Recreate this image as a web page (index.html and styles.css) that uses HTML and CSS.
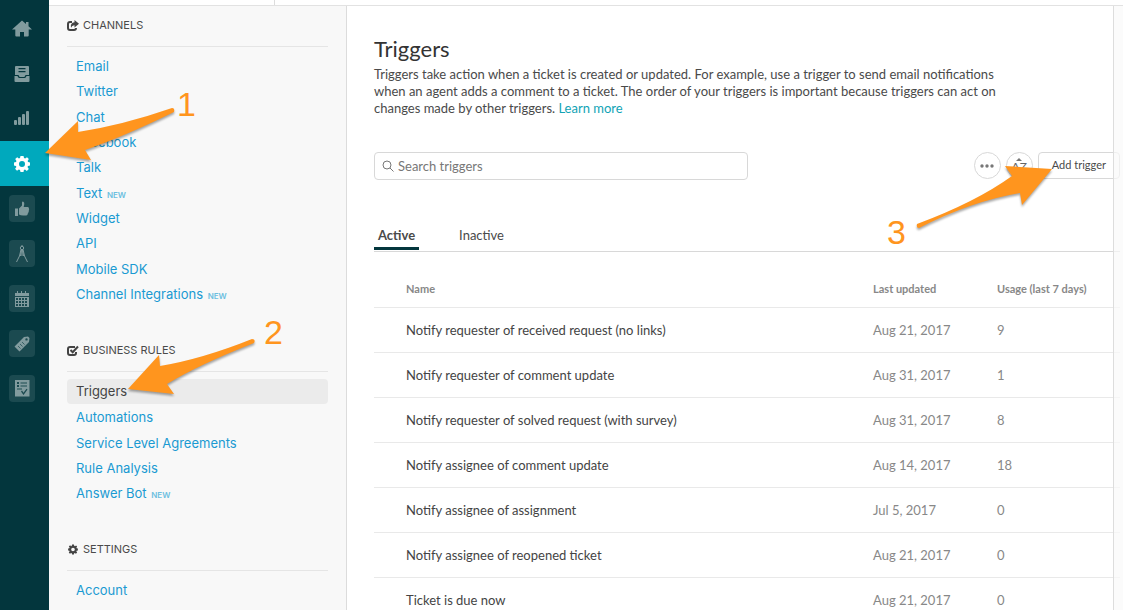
FILE: index.html
```html
<!DOCTYPE html>
<html lang="en">
<head>
<meta charset="utf-8">
<title>Triggers</title>
<meta name="viewport" content="width=device-width, initial-scale=1">
<link rel="stylesheet" href="styles.css">
</head>
<body>
<div class="app">
  <nav class="rail" aria-label="Primary">
    <a class="rail-item" href="#" aria-label="Home"><svg width="20" height="17" viewBox="0 0 20 17"><path d="M10 0.500 0 9.500h3.300v6q0 1 1 1H8v-4.500h4v4.500h3.700q1 0 1-1v-6H20l-3.500-3.200V2h-2.500v2z"/></svg></a>
    <a class="rail-item" href="#" aria-label="Views"><svg width="16" height="18" viewBox="0 0 16 18"><path fill-rule="evenodd" d="M2 1h12q1 0 1 1v8h-3.500q-.5 2-1.500 2H6q-1 0-1.500-2H1V2q0-1 1-1zm2.500 2v1.200h7V3zm0 3v1.200h7V6z"/><path d="M.5 11h3q.5 2 2 2h5q1.500 0 2-2h3v5q0 1-1 1h-13q-1 0-1-1z"/></svg></a>
    <a class="rail-item" href="#" aria-label="Reporting"><svg width="16" height="15" viewBox="0 0 16 15"><rect y="9" width="3" height="5" rx="1"/><rect x="4" y="6" width="3" height="8" rx="1"/><rect x="8" y="3" width="3" height="11" rx="1"/><rect x="12" width="3" height="14" rx="1"/></svg></a>
    <a class="rail-item active" href="#" aria-label="Admin"><svg width="18" height="18" viewBox="0 0 18 18"><path fill-rule="evenodd" d="M7.500 1h3l.5 2 1.200.5L14 2.300l1.800 1.800-1.200 1.800.5 1.200 1.900.4v3l-2 .4-.5 1.200 1.300 1.800-2 2-1.800-1.300-1.100.5-.4 2h-3l-.5-2-1.200-.5L4 15.800l-1.900-2 1.300-1.700-.5-1.200-1.900-.4v-3l2-.4.5-1.200-1.300-1.800 2-1.900 1.700 1.300L7 3zM9 6a3 3 0 1 0 0 6 3 3 0 0 0 0-6z"/></svg></a>
    <a class="rail-item boxed" href="#" aria-label="Satisfaction"><span><svg width="16" height="16" viewBox="0 0 16 16"><path d="M1 7.500h3V15H1zM5 7.500l3-3V1.500Q8 .5 9 .5q1.500.5 1.300 2.500l-.6 3h4q1.500.2 1.200 1.500.6.9-.1 1.700.5 1-.4 1.700.2 1-.6 1.700-.1 1.900-1.500 1.900H9q-2.500 0-4-1z"/></svg></span></a>
    <a class="rail-item boxed" href="#" aria-label="Compass"><span><svg width="14" height="18" viewBox="0 0 14 18"><path class="stroke" d="M7 0v1M6 4.500 4.500 11 1.500 17M8 4.500 9.500 11l3 6M7 5v6M6.500 5l-1 6M7.500 5l1 6"/><circle class="stroke" cx="7" cy="3" r="1.700"/></svg></span></a>
    <a class="rail-item boxed" href="#" aria-label="Calendar"><span><svg width="14" height="16" viewBox="0 0 14 16"><path fill-rule="evenodd" d="M0 2h2V0h1v2h3V0h1v2h3V0h1v2h3v3H0zM0 6h14v10H0zM1 7v2h2V7zm3 0v2h2V7zm3 0v2h2V7zm3 0v2h2V7zM1 10v2h2v-2zm3 0v2h2v-2zm3 0v2h2v-2zm3 0v2h2v-2zM1 13v2h2v-2zm3 0v2h2v-2zm3 0v2h2v-2zm3 0v2h2v-2z"/></svg></span></a>
    <a class="rail-item boxed" href="#" aria-label="Tags"><span><svg width="16" height="16" viewBox="0 0 16 16"><path fill-rule="evenodd" d="m10 1 4-.5 1.500 1.500L15 6l-9.500 9.500L.5 10.500zM12.500 2.200a1.200 1.200 0 1 0 0 2.400 1.200 1.200 0 0 0 0-2.400z"/><path class="cut" d="m8 6 2.500 2.500M6 8l2.500 2.500M4 10l2.500 2.500" stroke-dasharray="1 .5"/></svg></span></a>
    <a class="rail-item boxed" href="#" aria-label="Checklist"><span><svg width="15" height="17" viewBox="0 0 15 17"><path fill-rule="evenodd" d="M0 0h14.500v16.500H0zM2 2v2h2V2zm3.500.5v1H12v-1zM2 5v2h2V5zm3.500.5v1H12v-1zM2 8.500v1h5v-1zm4 3L8.500 15l4-5.500-1-.8-3 4L7 10.500z"/></svg></span></a>
  </nav>

  <div class="workspace">
    <header class="tabs-bar"><div class="tab-slot"></div></header>
    <div class="columns">
      <aside class="sidebar">
        <section>
          <h2><svg width="12" height="11" viewBox="0 0 12 11"><path class="line" d="M5 2H3Q1 2 1 4v4q0 2 2 2h4q2 0 2-2"/><path d="M7.500 0 12 3.700 7.500 7.400V5.200Q5 5 4 7.800 3 2.800 7.500 2.300z"/></svg>CHANNELS</h2>
          <ul>
            <li><a href="#">Email</a></li>
            <li><a href="#">Twitter</a></li>
            <li><a href="#">Chat</a></li>
            <li><a href="#">Facebook</a></li>
            <li><a href="#">Talk</a></li>
            <li><a href="#">Text <small>NEW</small></a></li>
            <li><a href="#">Widget</a></li>
            <li><a href="#">API</a></li>
            <li><a href="#">Mobile SDK</a></li>
            <li><a href="#">Channel Integrations <small>NEW</small></a></li>
          </ul>
        </section>
        <section>
          <h2><svg width="12" height="11" viewBox="0 0 12 11"><path class="line" d="M8 2H3Q1 2 1 4v4q0 2 2 2h4q2 0 2-2V7M3.500 5l2.200 2.200L11 1.500"/></svg>BUSINESS RULES</h2>
          <ul>
            <li class="current"><a href="#" aria-current="page">Triggers</a></li>
            <li><a href="#">Automations</a></li>
            <li><a href="#">Service Level Agreements</a></li>
            <li><a href="#">Rule Analysis</a></li>
            <li><a href="#">Answer Bot <small>NEW</small></a></li>
          </ul>
        </section>
        <section>
          <h2><svg width="12" height="11" viewBox="0 0 18 18"><path fill-rule="evenodd" d="M7.500 1h3l.5 2 1.200.5L14 2.300l1.800 1.800-1.200 1.800.5 1.200 1.900.4v3l-2 .4-.5 1.200 1.300 1.800-2 2-1.800-1.300-1.100.5-.4 2h-3l-.5-2-1.200-.5L4 15.800l-1.900-2 1.300-1.700-.5-1.200-1.900-.4v-3l2-.4.5-1.200-1.300-1.800 2-1.900 1.700 1.300L7 3zM9 6a3 3 0 1 0 0 6 3 3 0 0 0 0-6z"/></svg>SETTINGS</h2>
          <ul>
            <li><a href="#">Account</a></li>
          </ul>
        </section>
      </aside>

      <main>
        <h1>Triggers</h1>
        <p class="intro">Triggers take action when a ticket is created or updated. For example, use a trigger to send email notifications<br>when an agent adds a comment to a ticket. The order of your triggers is important because triggers can act on<br>changes made by other triggers. <a href="#">Learn more</a></p>
        <div class="toolbar">
          <label class="search">
            <svg width="12" height="12" viewBox="0 0 12 12"><circle cx="5" cy="5" r="4"/><path d="m8 8 3.500 3.500"/></svg>
            <input type="search" placeholder="Search triggers" aria-label="Search triggers">
          </label>
          <div class="actions">
            <button class="round" type="button" aria-label="More"><svg width="16" height="4" viewBox="0 0 16 4"><circle cx="3" cy="2" r="1.700"/><circle cx="8" cy="2" r="1.700"/><circle cx="13" cy="2" r="1.700"/></svg></button>
            <button class="round sort" type="button" aria-label="Sort"><svg width="8" height="3" viewBox="0 0 8 3"><path d="m4 0 3 3H1z"/></svg>AZ</button>
            <button class="add" type="button">Add trigger</button>
          </div>
        </div>
        <div class="tabs" role="tablist">
          <button type="button" role="tab" aria-selected="true">Active</button>
          <button type="button" role="tab" aria-selected="false">Inactive</button>
        </div>
        <table>
          <thead><tr><th class="name">Name</th><th class="date">Last updated</th><th class="usage">Usage (last 7 days)</th></tr></thead>
          <tbody>
            <tr><td>Notify requester of received request (no links)</td><td>Aug 21, 2017</td><td>9</td></tr>
            <tr><td>Notify requester of comment update</td><td>Aug 31, 2017</td><td>1</td></tr>
            <tr><td>Notify requester of solved request (with survey)</td><td>Aug 31, 2017</td><td>8</td></tr>
            <tr><td>Notify assignee of comment update</td><td>Aug 14, 2017</td><td>18</td></tr>
            <tr><td>Notify assignee of assignment</td><td>Jul 5, 2017</td><td>0</td></tr>
            <tr><td>Notify assignee of reopened ticket</td><td>Aug 21, 2017</td><td>0</td></tr>
            <tr><td>Ticket is due now</td><td>Aug 21, 2017</td><td>0</td></tr>
          </tbody>
        </table>
      </main>
    </div>
    <div class="drawer-edge"></div>
  </div>

  <svg class="callout to-admin" width="136" height="62" viewBox="0 0 136 62"><path d="M2 47 35 15v11Q80 19 129 2q3 0 2 4Q80 31 42 44l6 10Z"/></svg>
  <svg class="callout to-triggers" width="136" height="66" viewBox="0 0 136 66"><path d="M2 53 33 19l1 11Q76 23 126 3q4 0 2 4Q72 29 41 48l7 10Z"/></svg>
  <svg class="callout to-add" width="144" height="70" viewBox="0 0 144 70"><path d="M138 8 91 5l7 10Q62 41 3 63q-1 4 2 4Q58 40 106 32l2 12Z"/></svg>
  <span class="step step-one">1</span>
  <span class="step step-two">2</span>
  <span class="step step-three">3</span>
</div>
</body>
</html>
```
FILE: styles.css
```css
* { box-sizing: border-box; }
body {
  margin: 0;
  background: #fff;
  color: #4a4a4a;
  font-family: Lato, sans-serif;
  font-size: 13px;
}
a { text-decoration: none; }
button, input { font: inherit; color: inherit; }
button { background: none; border: 0; padding: 0; cursor: pointer; }
h1, h2, p, ul { margin: 0; padding: 0; font-weight: 400; }
ul { list-style: none; }

.app {
  position: relative;
  display: flex;
  height: 100vh;
  overflow: hidden;
}

/* Icon rail */
.rail {
  flex: 0 0 49px;
  padding-top: 6px;
  background: #03363d;
}
.rail-item {
  display: flex;
  align-items: center;
  justify-content: center;
  height: 45px;
  padding-right: 5px;
  fill: #819b9e;
}
.rail-item.active { background: #00a9bd; fill: #fff; }
.rail-item .cut { fill: none; stroke: #1b4a50; }
.rail-item .stroke { fill: none; stroke: #819b9e; }
.rail-item span {
  display: flex;
  align-items: center;
  justify-content: center;
  width: 26px;
  height: 27px;
  border-radius: 4px;
  background: #1b4a50;
}

.workspace {
  position: relative;
  flex: 1;
  min-width: 0;
  display: flex;
  flex-direction: column;
}
.tabs-bar {
  flex: 0 0 6px;
  display: flex;
  border-bottom: 1px solid #e2e2e2;
}
.tab-slot { width: 226px; border-right: 1px solid #ddd; }
.columns { flex: 1; min-height: 0; display: flex; }

/* Settings sidebar */
.sidebar {
  flex: 0 0 298px;
  padding: 9px 18px 0;
  overflow: hidden;
  border-right: 1px solid #dcdcdc;
  background: #f8f8f8;
  font-family: Inter, sans-serif;
}
.sidebar section { margin-bottom: 33px; }
.sidebar h2 {
  display: flex;
  align-items: center;
  gap: 4px;
  margin-bottom: 7px;
  padding-bottom: 11px;
  border-bottom: 1px solid #e5e5e5;
  font-size: 11px;
  line-height: 20px;
}
.sidebar h2 svg { fill: #444; }
.sidebar h2 .line { fill: none; stroke: #444; stroke-width: 2; }
.sidebar li {
  height: 25px;
  padding-left: 9px;
  border-radius: 4px;
  line-height: 25px;
}
.sidebar li:nth-child(3n) { height: 26px; line-height: 26px; }
.sidebar li a { color: #1a9ad2; }
.sidebar li.current { margin-bottom: 1px; background: #ebebeb; }
.sidebar li.current a { color: #444; }
.sidebar small {
  margin-left: 1px;
  color: #6cbfe0;
  font-size: 8px;
  font-weight: 600;
}

/* Content */
main {
  flex: 1;
  min-width: 0;
  padding: 29px 3px 0 27px;
  overflow: hidden;
}
h1 {
  color: #333;
  font-size: 22px;
  line-height: 28px;
}
.intro {
  margin-top: 3px;
  line-height: 17px;
}
.intro a { color: #11a3b5; }
.toolbar {
  display: flex;
  align-items: flex-start;
  justify-content: space-between;
  gap: 16px;
  margin-top: 35px;
}
.search {
  flex: 0 1 374px;
  display: flex;
  align-items: center;
  gap: 4px;
  height: 28px;
  padding: 0 7px;
  border: 1px solid #d8d8d8;
  border-radius: 4px;
}
.search svg { fill: none; stroke: #777; stroke-width: 1; }
.search input {
  flex: 1;
  min-width: 0;
  padding: 0;
  border: 0;
  outline: 0;
  background: none;
}
.search input::placeholder { color: #777; }
.actions { display: flex; gap: 5px; }
.round {
  display: flex;
  flex-direction: column;
  align-items: center;
  justify-content: center;
  width: 27px;
  height: 27px;
  border: 1px solid #d8d8d8;
  border-radius: 50%;
  fill: #777;
  color: #666;
}
.sort { font-size: 12px; line-height: 12px; }
.add {
  height: 27px;
  padding: 0 13px 2px;
  border: 1px solid #d8d8d8;
  border-radius: 4px;
  font-size: 11px;
}
.tabs {
  display: flex;
  gap: 36px;
  margin-top: 42px;
  border-bottom: 1px solid #d8d8d8;
}
.tabs button {
  height: 28px;
  margin-bottom: 1px;
  padding: 0 4px;
  border-bottom: 3px solid transparent;
  line-height: 26px;
}
.tabs [aria-selected="true"] { border-color: #03363d; font-weight: 700; }

table {
  width: 100%;
  border-collapse: collapse;
  table-layout: fixed;
}
th, td {
  height: 45px;
  padding: 0;
  border-bottom: 1px solid #e9e9e9;
  text-align: left;
}
th {
  height: 55px;
  padding-top: 19px;
  color: #888;
  font-size: 11px;
  font-weight: 700;
}
td { color: #888; }
td:first-child { color: #444; }
th:first-child, td:first-child { padding-left: 32px; }
.date { width: 124px; }
.usage { width: 123px; }

.drawer-edge {
  position: absolute;
  top: 6px;
  right: 0;
  bottom: 0;
  width: 10px;
  border-left: 1px solid #ddd;
  background: rgba(250, 250, 250, 0.7);
}

/* Walkthrough callouts */
.callout {
  position: absolute;
  overflow: visible;
  fill: #ff951e;
  filter: drop-shadow(0 2px 1px rgba(0, 0, 0, 0.35));
  pointer-events: none;
}
.to-admin { left: 43px; top: 106px; }
.to-triggers { left: 126px; top: 336px; }
.to-add { left: 914px; top: 161px; }
.step {
  position: absolute;
  color: #ff951e;
  font-family: "Liberation Sans", Arial, sans-serif;
  font-size: 34px;
  line-height: 40px;
}
.step-one { left: 177px; top: 84px; }
.step-two { left: 264px; top: 312px; }
.step-three { left: 887px; top: 212px; }
```
